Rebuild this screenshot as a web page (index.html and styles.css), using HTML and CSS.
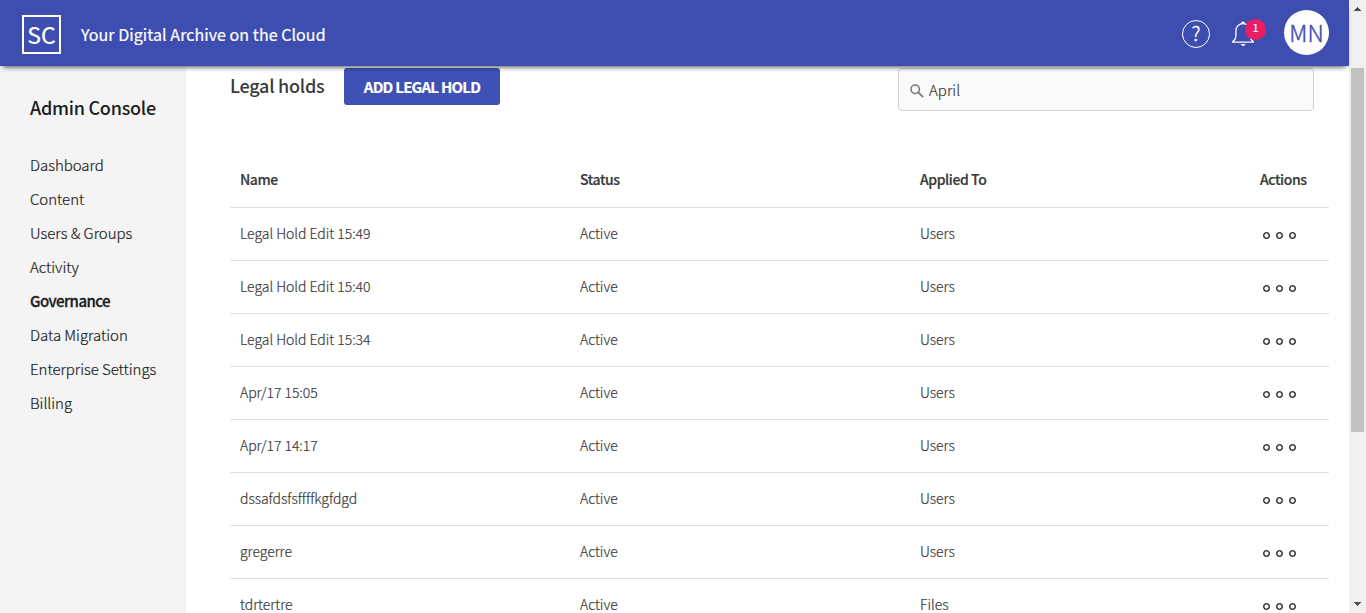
FILE: index.html
```html
<!DOCTYPE html>
<html lang="en">
<head>
<meta charset="utf-8">
<title>Legal holds</title>
<link rel="stylesheet" href="styles.css">
</head>
<body>
<div class="app">
  <header class="topbar">
    <div class="logo"><span class="logo-text">SC</span></div>
    <div class="tagline"><span>Your Digital Archive on the Cloud</span></div>
    <div class="tools">
      <div class="help"><span>?</span></div>
      <div class="bell">
        <svg width="24" height="26" viewBox="0 0 24 26" fill="none" stroke="#fff" stroke-width="1.3"><path d="M1 21.200h22M1.500 20.800c2.600-1.600 3.400-3.400 3.400-6.500V9.700C4.900 5.700 8 2.600 12 2.600s7.100 3.100 7.100 7.100v4.600c0 3.100.8 4.900 3.400 6.500"/><path fill="#fff" stroke="none" d="M10 2.400a2 1.900 0 0 1 4 0zM9.800 23h4.600c-.4 1.200-1.300 1.900-2.300 1.900s-1.900-.7-2.300-1.900z"/></svg>
        <span class="badge">1</span>
      </div>
      <div class="avatar"><span>MN</span></div>
    </div>
  </header>
  <div class="body">
    <nav class="sidebar">
      <h2 class="side-title"><span>Admin Console</span></h2>
      <ul class="menu">
        <li><span>Dashboard</span></li>
        <li><span>Content</span></li>
        <li><span>Users &amp; Groups</span></li>
        <li><span>Activity</span></li>
        <li class="current"><span>Governance</span></li>
        <li><span>Data Migration</span></li>
        <li><span>Enterprise Settings</span></li>
        <li><span>Billing</span></li>
      </ul>
    </nav>
    <main class="content">
      <div class="heading">
        <h1 class="title">Legal holds</h1>
        <button class="add">ADD LEGAL HOLD</button>
        <div class="search">
          <svg width="14" height="14" viewBox="0 0 14 14" fill="none" stroke="#757575" stroke-width="1.500"><circle cx="5.200" cy="5.200" r="4.200"/><path d="M8.300 8.300l4.800 4.800" stroke-width="1.700"/></svg>
          <span>April</span>
        </div>
      </div>
      <div class="table">
        <div class="row head"><span>Name</span><span>Status</span><span>Applied To</span><span>Actions</span></div>
        <div class="row"><span>Legal Hold Edit 15:49</span><span>Active</span><span>Users</span><span class="dots"><i></i><i></i><i></i></span></div>
        <div class="row"><span>Legal Hold Edit 15:40</span><span>Active</span><span>Users</span><span class="dots"><i></i><i></i><i></i></span></div>
        <div class="row"><span>Legal Hold Edit 15:34</span><span>Active</span><span>Users</span><span class="dots"><i></i><i></i><i></i></span></div>
        <div class="row"><span>Apr/17 15:05</span><span>Active</span><span>Users</span><span class="dots"><i></i><i></i><i></i></span></div>
        <div class="row"><span>Apr/17 14:17</span><span>Active</span><span>Users</span><span class="dots"><i></i><i></i><i></i></span></div>
        <div class="row"><span>dssafdsfsffffkgfdgd</span><span>Active</span><span>Users</span><span class="dots"><i></i><i></i><i></i></span></div>
        <div class="row"><span>gregerre</span><span>Active</span><span>Users</span><span class="dots"><i></i><i></i><i></i></span></div>
        <div class="row"><span>tdrtertre</span><span>Active</span><span>Files</span><span class="dots"><i></i><i></i><i></i></span></div>
      </div>
    </main>
  </div>
</div>
<div class="scrollbar">
  <svg width="7" height="4" viewBox="0 0 7 4" fill="#505050" shape-rendering="crispEdges"><path d="M3 0h1v1h1v1h1v1h1v1H0V3h1V2h1V1h1z"/></svg>
  <div class="track"><div class="thumb"></div></div>
  <svg width="7" height="4" viewBox="0 0 7 4" fill="#505050" shape-rendering="crispEdges"><path d="M0 0h7v1H6v1H5v1H4v1H3V3H2V2H1V1H0z"/></svg>
</div>
</body>
</html>
```
FILE: styles.css
```css
* { box-sizing: border-box; }
body {
  margin: 0;
  width: 1366px;
  height: 613px;
  overflow: hidden;
  display: flex;
  background: #fff;
  color: #3a3a3a;
  font-family: "Noto Sans CJK SC", "Noto Sans", sans-serif;
  font-size: 14px;
  font-weight: 300;
  line-height: 20px;
  white-space: nowrap;
  -webkit-text-stroke: .2px;
}
.app { flex: 1; display: flex; flex-direction: column; min-width: 0; }
.topbar {
  position: relative;
  z-index: 2;
  flex: none;
  height: 66px;
  display: flex;
  align-items: flex-start;
  padding: 0 20px 0 22px;
  background: #3d4eb0;
  color: #fff;
  box-shadow: 0 4px 5px -3px rgba(0, 0, 0, .7);
}
.logo {
  width: 39px;
  height: 39px;
  margin-top: 15px;
  border: 2px solid #fff;
  display: flex;
  align-items: center;
  justify-content: center;
  font-size: 23px;
  font-weight: 400;
}
.logo-text { margin-top: -1px; }
.tagline { margin: 24px 0 0 20px; font-size: 16px; font-weight: 400; letter-spacing: .06px; }
.tools { margin-left: auto; display: flex; align-items: flex-start; }
.help {
  width: 28px;
  height: 28px;
  margin-top: 20px;
  border: 1.3px solid #fff;
  border-radius: 50%;
  display: flex;
  align-items: center;
  justify-content: center;
  font-size: 19px;
}
.help span { margin-top: -2px; -webkit-text-stroke: .4px; }
.bell { position: relative; margin: 21px 0 0 21px; width: 24px; height: 26px; }
.bell svg { display: block; }
.badge {
  position: absolute;
  left: 14px;
  top: -2px;
  width: 21px;
  height: 21px;
  border-radius: 50%;
  background: #e91e63;
  text-align: center;
  font-size: 11px;
  font-weight: 400;
  line-height: 17px;
}
.avatar {
  width: 45px;
  height: 45px;
  margin: 10px 0 0 29px;
  border-radius: 50%;
  background: #fff;
  color: #3d4eb0;
  display: flex;
  align-items: center;
  justify-content: center;
  font-size: 23px;
}
.avatar span { margin-top: -1px; -webkit-text-stroke: .4px; }
.body { flex: 1; display: flex; min-height: 0; }
.sidebar { width: 186px; flex: none; background: #f4f4f4; padding: 31px 0 0 30px; color: #1c1c1c; }
.side-title { margin: 0; font-size: 18px; font-weight: 500; line-height: 20px; letter-spacing: -.25px; -webkit-text-stroke: 0; }
.menu { list-style: none; margin: 31px 0 0; padding: 0; font-size: 15px; letter-spacing: -.04px; }
.menu li { height: 34px; line-height: 34px; }
.menu .current { font-weight: 500; letter-spacing: -.55px; -webkit-text-stroke: .3px; }
.content { flex: 1; padding: 2px 20px 0 44px; overflow: hidden; }
.heading { display: flex; align-items: flex-start; height: 86px; }
.title { margin: 7px 0 0; width: 114px; font-size: 18px; line-height: 20px; font-weight: 500; letter-spacing: -.25px; -webkit-text-stroke: 0; }
.add {
  width: 156px;
  height: 37px;
  border: 0;
  border-radius: 3px;
  padding: 1px 0 0;
  background: #3f51b5;
  color: #fff;
  font: 700 15px/20px "Noto Sans CJK SC", sans-serif;
  letter-spacing: -.75px;
}
.search {
  margin: 0 15px 0 auto;
  width: 416px;
  height: 43px;
  border: 1px solid #ced4da;
  border-radius: 4px;
  background: #fafafa;
  display: flex;
  align-items: center;
  gap: 5px;
  padding: 2px 0 0 11px;
  font-size: 15px;
}
.search span { margin-top: -2px; }
.row {
  display: grid;
  grid-template-columns: 340px 340px 340px 1fr;
  height: 53px;
  align-items: center;
  padding: 0 0 2px 10px;
  border-top: 1px solid #e0e0e0;
  letter-spacing: -.04px;
}
.row.head { border-top: 0; padding-bottom: 3px; font-weight: 500; letter-spacing: -.42px; -webkit-text-stroke: .2px; }
.dots { display: flex; gap: 6px; padding: 5px 0 0 2.5px; }
.dots i { width: 7px; height: 7px; border: 1px solid #000; border-radius: 50%; box-shadow: inset 0 0 0 .3px #000; }
.scrollbar {
  width: 17px;
  flex: none;
  background: #f0f0f0;
  display: flex;
  flex-direction: column;
  align-items: center;
  padding: 7px 0;
}
.track { flex: 1; width: 13px; padding-top: 57px; }
.thumb { height: 364px; background: #c1c1c1; }
```
